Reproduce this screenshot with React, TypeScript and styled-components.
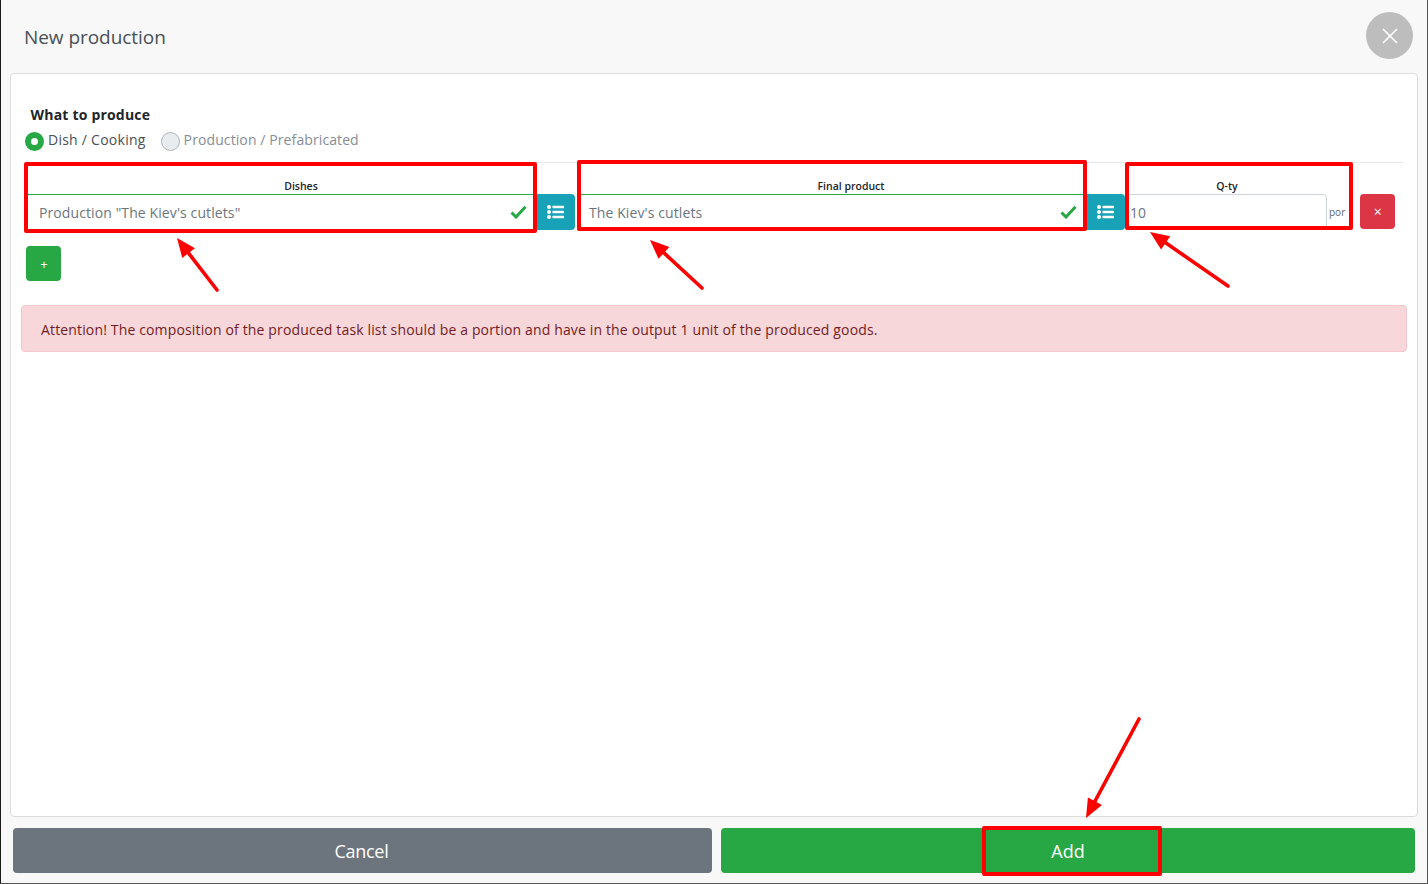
import React from "react";
import styled, { createGlobalStyle } from "styled-components";

const Global = createGlobalStyle`
  html, body { margin: 0; padding: 0; background: #fff; }
  body { font-family: "Open Sans", "Noto Sans", sans-serif; color: #212529; }
  * { box-sizing: border-box; }
`;

const Dialog = styled.div`
  position: relative;
  width: 1428px;
  height: 884px;
  display: flex;
  flex-direction: column;
  background: #f8f8f8;
  border-left: 1px solid #1a1a1a;
  border-right: 1px solid #555;
  border-bottom: 1px solid #555;
  overflow: hidden;
`;

const Header = styled.header`
  height: 73px;
  flex: none;
  display: flex;
  align-items: flex-start;
  justify-content: space-between;
  padding: 12px 14px 0 23px;
`;

const Title = styled.h1`
  margin: 12px 0 0;
  font-size: 19px;
  line-height: 26px;
  font-weight: 400;
  color: #495057;
  letter-spacing: -0.05px;
`;

const CloseButton = styled.button`
  width: 47px;
  height: 47px;
  border: 0;
  border-radius: 50%;
  background: #bdbdbd;
  display: flex;
  align-items: center;
  justify-content: center;
  padding: 0;
`;

const Card = styled.main`
  flex: none;
  height: 744px;
  margin: 0 9px;
  background: #fff;
  border: 1px solid #dcdcdc;
  border-radius: 4px;
  padding: 31px 10px 0;
`;

const Section = styled.div`
  padding-left: 9.5px;
  font-size: 14px;
  font-weight: 700;
  line-height: 20px;
  letter-spacing: 0.2px;
  color: #212529;
`;

const RadioRow = styled.div`
  display: flex;
  align-items: center;
  gap: 15px;
  margin: 5px 0 0 4px;
  height: 20px;
`;

const RadioLabel = styled.label<{ $active?: boolean }>`
  display: flex;
  align-items: center;
  gap: 4px;
  font-size: 14px;
  line-height: 18px;
  letter-spacing: ${(p) => (p.$active ? "0.25px" : "0.1px")};
  color: ${(p) => (p.$active ? "#495057" : "#868e96")};
`;

const RadioDot = styled.span<{ $active?: boolean }>`
  width: 19px;
  height: 19px;
  margin-top: 3px;
  border-radius: 50%;
  background: ${(p) => (p.$active ? "#fff" : "#e9ecef")};
  border: ${(p) => (p.$active ? "6px solid #28a745" : "1px solid #adb5bd")};
`;

const Divider = styled.hr`
  margin: 12px 4px 0;
  border: 0;
  border-top: 1px solid #e6e6e6;
`;

const FormRow = styled.div`
  display: flex;
  align-items: flex-end;
  gap: 2px;
  margin-left: 6px;
  height: 67px;
`;

const Field = styled.div<{ $width: number }>`
  width: ${(p) => p.$width}px;
  flex: none;
`;

const FieldLabel = styled.div`
  font-size: 10.5px;
  font-weight: 600;
  line-height: 14px;
  text-align: center;
  margin-bottom: 1px;
  color: #212529;
`;

const InputGroup = styled.div`
  display: flex;
`;

const InputBox = styled.div<{ $valid?: boolean }>`
  flex: 1;
  height: 36px;
  display: flex;
  align-items: center;
  justify-content: space-between;
  border: 1px solid ${(p) => (p.$valid ? "#28a745" : "#ced4da")};
  background: #fff;
  padding: 0 9px 0 11px;
  font-size: 14px;
  letter-spacing: 0.1px;
  color: #6c757d;
`;

const QtyBox = styled(InputBox)`
  flex: 0 0 200px;
  padding-left: 2px;
  border-radius: 0 4px 0 0;
`;

const Unit = styled.span`
  font-size: 10px;
  line-height: 36px;
  color: #5f666c;
`;

const ListButton = styled.button`
  flex: none;
  width: 38px;
  height: 36px;
  border: 0;
  border-radius: 0 4px 4px 0;
  background: #17a2b8;
  display: flex;
  align-items: center;
  justify-content: center;
  padding: 0 2px 0 0;
`;

const DeleteButton = styled.button`
  flex: none;
  width: 35px;
  height: 35px;
  margin: 0 0 1px 13px;
  border: 0;
  border-radius: 4px;
  background: #dc3545;
  color: #fff;
  font: 400 14px "Open Sans", sans-serif;
  padding: 0;
`;

const AddRowButton = styled.button`
  display: block;
  width: 35px;
  height: 35px;
  margin: 16px 0 0 5px;
  border: 0;
  border-radius: 4px;
  background: #28a745;
  color: #fff;
  font: 400 13px "Open Sans", sans-serif;
  padding: 0 0 0 1px;
`;

const Alert = styled.div`
  height: 47px;
  margin: 24px 0 0;
  padding: 1px 19px 0;
  display: flex;
  align-items: center;
  background: #f8d7da;
  border: 1px solid #f5c6cb;
  border-radius: 4px;
  color: #721c24;
  font-size: 14px;
  letter-spacing: 0.15px;
`;

const Footer = styled.footer`
  display: flex;
  gap: 9px;
  margin: 11px 12px 0;
`;

const FooterButton = styled.button<{ $green?: boolean }>`
  flex: ${(p) => (p.$green ? "0 0 694px" : "0 0 699px")};
  height: 45px;
  border: 0;
  border-radius: 4px;
  background: ${(p) => (p.$green ? "#28a745" : "#6c757d")};
  color: #fff;
  font: 400 18px "Open Sans", sans-serif;
  letter-spacing: ${(p) => (p.$green ? "0" : "-0.3px")};
  padding: ${(p) => (p.$green ? "0" : "0 2px 0 0")};
`;

const Mark = styled.div<{ $x: number; $y: number; $w: number; $h: number }>`
  position: absolute;
  left: ${(p) => p.$x - 1}px;
  top: ${(p) => p.$y}px;
  width: ${(p) => p.$w}px;
  height: ${(p) => p.$h}px;
  border: 4px solid #ff0000;
  border-radius: 2px;
  pointer-events: none;
`;

const ArrowLayer = styled.svg`
  position: absolute;
  left: -1px;
  top: 0;
  width: 1428px;
  height: 884px;
  pointer-events: none;
`;

const Check = () => (
  <svg width="17" height="14" viewBox="0 0 17 14" aria-hidden="true">
    <path d="M1.5 7.5 L6 12 L15.5 1.8" fill="none" stroke="#28a745" strokeWidth="3" />
  </svg>
);

const ListIcon = () => (
  <svg width="17" height="14" viewBox="0 0 17 14" aria-hidden="true" fill="#fff">
    <circle cx="2" cy="2" r="2" />
    <circle cx="2" cy="7" r="2" />
    <circle cx="2" cy="12" r="2" />
    <rect x="5.5" y="0.8" width="11.5" height="2.4" rx="0.5" />
    <rect x="5.5" y="5.8" width="11.5" height="2.4" rx="0.5" />
    <rect x="5.5" y="10.8" width="11.5" height="2.4" rx="0.5" />
  </svg>
);

const arrows = [
  { x1: 217, y1: 290, x2: 177, y2: 238 },
  { x1: 702, y1: 288, x2: 650, y2: 240 },
  { x1: 1228, y1: 286, x2: 1150, y2: 232 },
  { x1: 1139, y1: 719, x2: 1086, y2: 818 },
];

const Arrow = ({ x1, y1, x2, y2 }: { x1: number; y1: number; x2: number; y2: number }) => {
  const a = Math.atan2(y2 - y1, x2 - x1);
  const len = 19;
  const wing = 8;
  const bx = x2 - len * Math.cos(a);
  const by = y2 - len * Math.sin(a);
  const nx = -Math.sin(a);
  const ny = Math.cos(a);
  const pts = `${x2},${y2} ${bx + nx * wing},${by + ny * wing} ${bx - nx * wing},${by - ny * wing}`;
  return (
    <g>
      <line x1={x1} y1={y1} x2={bx} y2={by} stroke="#ff0000" strokeWidth="3.6" strokeLinecap="round" />
      <polygon points={pts} fill="#ff0000" />
    </g>
  );
};

export default function App() {
  return (
    <>
      <Global />
      <Dialog>
        <Header>
          <Title>New production</Title>
          <CloseButton aria-label="Close">
            <svg width="16" height="16" viewBox="0 0 16 16" aria-hidden="true">
              <path d="M1 1 L15 15 M15 1 L1 15" stroke="#fff" strokeWidth="1.6" />
            </svg>
          </CloseButton>
        </Header>
        <Card>
          <Section>What to produce</Section>
          <RadioRow>
            <RadioLabel $active>
              <RadioDot $active />
              Dish / Cooking
            </RadioLabel>
            <RadioLabel>
              <RadioDot />
              Production / Prefabricated
            </RadioLabel>
          </RadioRow>
          <Divider />
          <FormRow>
            <Field $width={548}>
              <FieldLabel>Dishes</FieldLabel>
              <InputGroup>
                <InputBox $valid>
                  Production "The Kiev's cutlets"
                  <Check />
                </InputBox>
                <ListButton>
                  <ListIcon />
                </ListButton>
              </InputGroup>
            </Field>
            <Field $width={548}>
              <FieldLabel>Final product</FieldLabel>
              <InputGroup>
                <InputBox $valid>
                  The Kiev's cutlets
                  <Check />
                </InputBox>
                <ListButton>
                  <ListIcon />
                </ListButton>
              </InputGroup>
            </Field>
            <Field $width={200}>
              <FieldLabel>Q-ty</FieldLabel>
              <QtyBox>10</QtyBox>
            </Field>
            <Unit>por</Unit>
            <DeleteButton>×</DeleteButton>
          </FormRow>
          <AddRowButton>+</AddRowButton>
          <Alert>
            Attention! The composition of the produced task list should be a portion and have in the output 1 unit of the produced goods.
          </Alert>
        </Card>
        <Footer>
          <FooterButton>Cancel</FooterButton>
          <FooterButton $green>Add</FooterButton>
        </Footer>
        <Mark $x={24} $y={162} $w={513} $h={71} />
        <Mark $x={577} $y={160} $w={510} $h={71} />
        <Mark $x={1125} $y={162} $w={228} $h={68} />
        <Mark $x={982} $y={826} $w={180} $h={50} />
        <ArrowLayer viewBox="0 0 1428 884">
          {arrows.map((a) => (
            <Arrow key={a.x1} {...a} />
          ))}
        </ArrowLayer>
      </Dialog>
    </>
  );
}
